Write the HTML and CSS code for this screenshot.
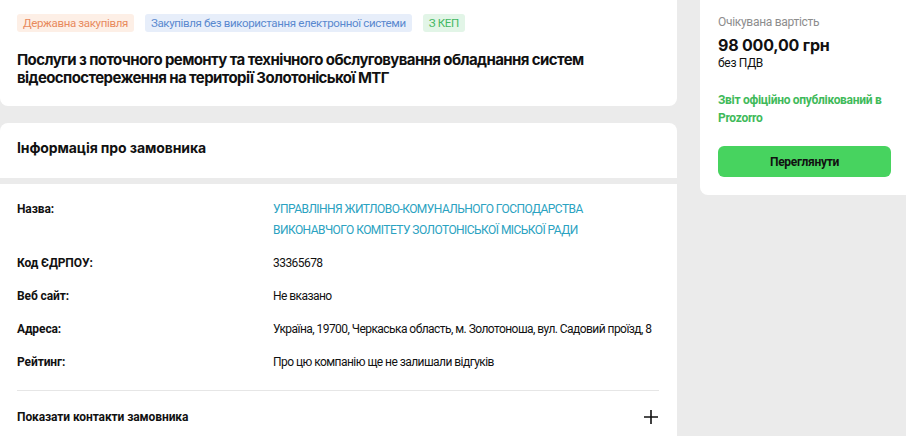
FILE: index.html
```html
<!DOCTYPE html>
<html lang="uk">
<head>
  <meta charset="UTF-8">
  <meta name="viewport" content="width=device-width, initial-scale=1.0">
  <title>Закупівля</title>
  <link rel="stylesheet" href="styles.css">
</head>
<body>
  <div class="page">
    <div class="main">
      <section class="card card-top">
        <div class="tags">
          <span class="tag tag-orange">Державна закупівля</span>
          <span class="tag tag-blue">Закупівля без використання електронної системи</span>
          <span class="tag tag-green">З КЕП</span>
        </div>
        <h1 class="title">Послуги з поточного ремонту та технічного обслуговування обладнання систем відеоспостереження на території Золотоніської МТГ</h1>
      </section>

      <section class="card card-head">
        <h2>Інформація про замовника</h2>
      </section>

      <section class="card card-body">
        <div class="row">
          <div class="label">Назва:</div>
          <div class="value link">УПРАВЛІННЯ ЖИТЛОВО-КОМУНАЛЬНОГО ГОСПОДАРСТВА ВИКОНАВЧОГО КОМІТЕТУ ЗОЛОТОНІСЬКОЇ МІСЬКОЇ РАДИ</div>
        </div>
        <div class="row">
          <div class="label">Код ЄДРПОУ:</div>
          <div class="value">33365678</div>
        </div>
        <div class="row">
          <div class="label">Веб сайт:</div>
          <div class="value">Не вказано</div>
        </div>
        <div class="row">
          <div class="label">Адреса:</div>
          <div class="value wide">Україна, 19700, Черкаська область, м. Золотоноша, вул. Садовий проїзд, 8</div>
        </div>
        <div class="row">
          <div class="label">Рейтинг:</div>
          <div class="value">Про цю компанію ще не залишали відгуків</div>
        </div>
        <div class="contacts">
          <span>Показати контакти замовника</span>
          <svg class="plus" width="16" height="16" viewBox="0 0 16 16"><path d="M8 1v14M1 8h14" stroke="#111" stroke-width="1.6" fill="none"/></svg>
        </div>
      </section>
    </div>

    <aside class="side">
      <div class="card side-card">
        <div class="muted">Очікувана вартість</div>
        <div class="price">98 000,00 грн</div>
        <div class="vat">без ПДВ</div>
        <div class="report">Звіт офіційно опублікований в Prozorro</div>
        <button type="button" class="btn">Переглянути</button>
      </div>
    </aside>
  </div>
</body>
</html>
```

FILE: styles.css
```css
body {
  margin: 0;
  background-color: #ebebeb;
  font-family: Roboto, "Noto Sans", sans-serif;
  color: #111;
}

.page {
  display: flex;
  gap: 23px;
  align-items: flex-start;
}

.main {
  width: 677px;
  flex-shrink: 0;
}

.card {
  background-color: #fff;
}

.card-top {
  padding: 14px 17px 19px;
  border-radius: 0 0 8px 8px;
  margin-bottom: 17px;
}

.tags {
  display: flex;
  gap: 11px;
  margin-bottom: 19px;
}

.tag {
  font-size: 11.5px;
  line-height: 18px;
  padding: 0 6px;
  border-radius: 3px;
  letter-spacing: -0.35px;
}
.tag-orange {
  background-color: #fdefe6;
  color: #e88a5d;
}
.tag-blue {
  background-color: #e7eefa;
  color: #5a89cf;
}
.tag-green {
  background-color: #e2f5e7;
  color: #42b862;
}

.title {
  margin: 0;
  font-family: Inter, "Noto Sans", sans-serif;
  font-size: 15px;
  line-height: 18px;
  font-weight: 700;
  letter-spacing: -0.6px;
  max-width: 600px;
}

.card-head {
  border-radius: 8px 8px 0 0;
  padding: 16px 17px 21px;
  margin-bottom: 6px;
}
.card-head h2 {
  margin: 0;
  font-family: Inter, "Noto Sans", sans-serif;
  font-size: 14px;
  line-height: 18px;
  font-weight: 700;
  letter-spacing: -0.1px;
}

.card-body {
  padding: 15px 18px 0 17px;
  min-height: 254px;
}

.row {
  display: flex;
  font-size: 12px;
  line-height: 21px;
  margin-bottom: 12px;
}
.label {
  width: 256px;
  flex-shrink: 0;
  font-weight: 700;
  letter-spacing: -0.1px;
}
.value {
  max-width: 330px;
  letter-spacing: -0.55px;
}
.value.wide {
  max-width: none;
  white-space: nowrap;
}
.link {
  color: #2aa2c1;
}

.contacts {
  border-top: 1px solid #e6e6e6;
  margin-top: 17px;
  padding-top: 18px;
  display: flex;
  justify-content: space-between;
  align-items: center;
  font-size: 12px;
  font-weight: 700;
  letter-spacing: -0.1px;
}

.side {
  width: 206px;
}
.side-card {
  padding: 14px 18px 18px;
  border-radius: 0 0 0 8px;
  font-size: 12px;
}
.muted {
  color: #8d8d8d;
  line-height: 16px;
  letter-spacing: -0.3px;
}
.price {
  font-family: Inter, "Noto Sans", sans-serif;
  font-size: 16px;
  font-weight: 700;
  line-height: 20px;
  margin-top: 5px;
  letter-spacing: -0.2px;
}
.vat {
  line-height: 16px;
  letter-spacing: -0.3px;
}
.report {
  margin-top: 20px;
  color: #3fba5a;
  font-weight: 700;
  line-height: 18px;
  letter-spacing: -0.3px;
}
.btn {
  display: block;
  width: 173px;
  height: 31px;
  margin-top: 19px;
  border: none;
  border-radius: 6px;
  background-color: #47d35f;
  font-family: inherit;
  font-size: 12px;
  font-weight: 700;
  color: #111;
  letter-spacing: -0.3px;
}
```
